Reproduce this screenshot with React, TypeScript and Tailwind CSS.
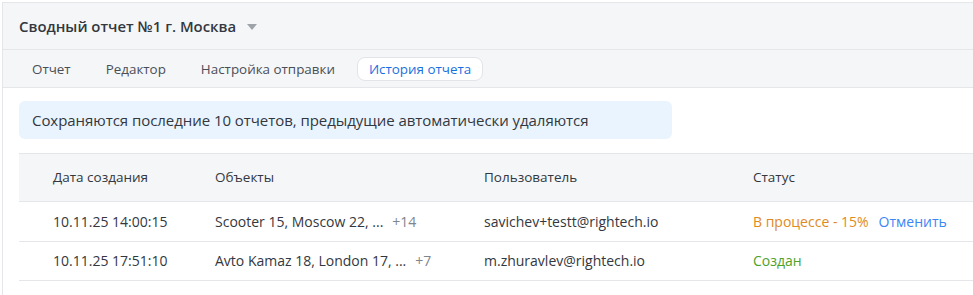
const tabs = ["Отчет", "Редактор", "Настройка отправки", "История отчета"];

type Row = {
  date: string;
  objects: string;
  more: string;
  user: string;
  status: string;
  tone: "progress" | "done";
  cancel?: boolean;
};

const rows: Row[] = [
  {
    date: "10.11.25 14:00:15",
    objects: "Scooter 15, Moscow 22, ...",
    more: "+14",
    user: "savichev+testt@rightech.io",
    status: "В процессе - 15%",
    tone: "progress",
    cancel: true,
  },
  {
    date: "10.11.25 17:51:10",
    objects: "Avto Kamaz 18, London 17, ...",
    more: "+7",
    user: "m.zhuravlev@rightech.io",
    status: "Создан",
    tone: "done",
  },
  {
    date: "09.11.25 16:44:31",
    objects: "Avto Kamaz 18, London 17, ...",
    more: "+3",
    user: "m.zhuravlev@rightech.io",
    status: "Создан",
    tone: "done",
  },
];

export default function App() {
  return (
    <div className="h-[295px] overflow-hidden bg-white pl-[2px] pt-[2px] font-['Open_Sans',sans-serif] text-[#333840]">
      <div className="h-full border-l border-t border-[#e4e6e9]">
        {/* Title */}
        <div className="flex h-[47px] items-center gap-[11px] border-b border-[#e4e6e9] bg-[#f5f6f8] pl-[16px]">
          <h1 className="text-[14.9px] font-semibold">Сводный отчет №1 г. Москва</h1>
          <svg width="10" height="6" viewBox="0 0 10 6" className="mt-[1px]">
            <path d="M0 0h10L5 6z" fill="#9ea3aa" />
          </svg>
        </div>

        {/* Tabs */}
        <div className="flex h-[38px] items-center gap-[9px] border-b border-[#e4e6e9] bg-[#f5f6f8] pl-[16px]">
          {tabs.map((t, i) =>
            i === tabs.length - 1 ? (
              <span
                key={t}
                className="rounded-[8px] border border-[#e2e4e8] bg-white px-[11px] py-[2px] text-[13.4px] leading-[18px] text-[#1a6fe0]"
              >
                {t}
              </span>
            ) : (
              <span key={t} className="px-[13px] text-[13.4px] leading-[18px] text-[#4a4f57]">
                {t}
              </span>
            )
          )}
        </div>

        {/* Notice */}
        <div className="px-[16px] pt-[13px]">
          <div className="flex h-[38px] w-[653px] items-center rounded-[6px] bg-[#eaf4fe] pl-[13px] text-[15px] tracking-[-0.05px]">
            Сохраняются последние 10 отчетов, предыдущие автоматически удаляются
          </div>
        </div>

        {/* Table */}
        <div className="ml-[16px] mt-[14px] border-t border-[#e4e6e9] text-[14px]">
          <div className="grid h-[48px] grid-cols-[162px_269px_269px_1fr] items-center border-b border-[#e4e6e9] bg-[#f5f6f8] pl-[34px] text-[13.5px] font-medium">
            <span>Дата создания</span>
            <span>Объекты</span>
            <span>Пользователь</span>
            <span>Статус</span>
          </div>
          {rows.map((r) => (
            <div
              key={r.date}
              className="grid h-[39.5px] grid-cols-[162px_269px_269px_1fr] items-center border-b border-[#e4e6e9] pl-[34px]"
            >
              <span>{r.date}</span>
              <span>
                {r.objects}
                <span className="ml-[9px] text-[#80858d]">{r.more}</span>
              </span>
              <span>{r.user}</span>
              <span className="flex items-center gap-[10px]">
                <span className={r.tone === "progress" ? "text-[#e08a1e]" : "text-[#4ea22a]"}>{r.status}</span>
                {r.cancel && <span className="text-[#3a86f5]">Отменить</span>}
              </span>
            </div>
          ))}
        </div>
      </div>
    </div>
  );
}
